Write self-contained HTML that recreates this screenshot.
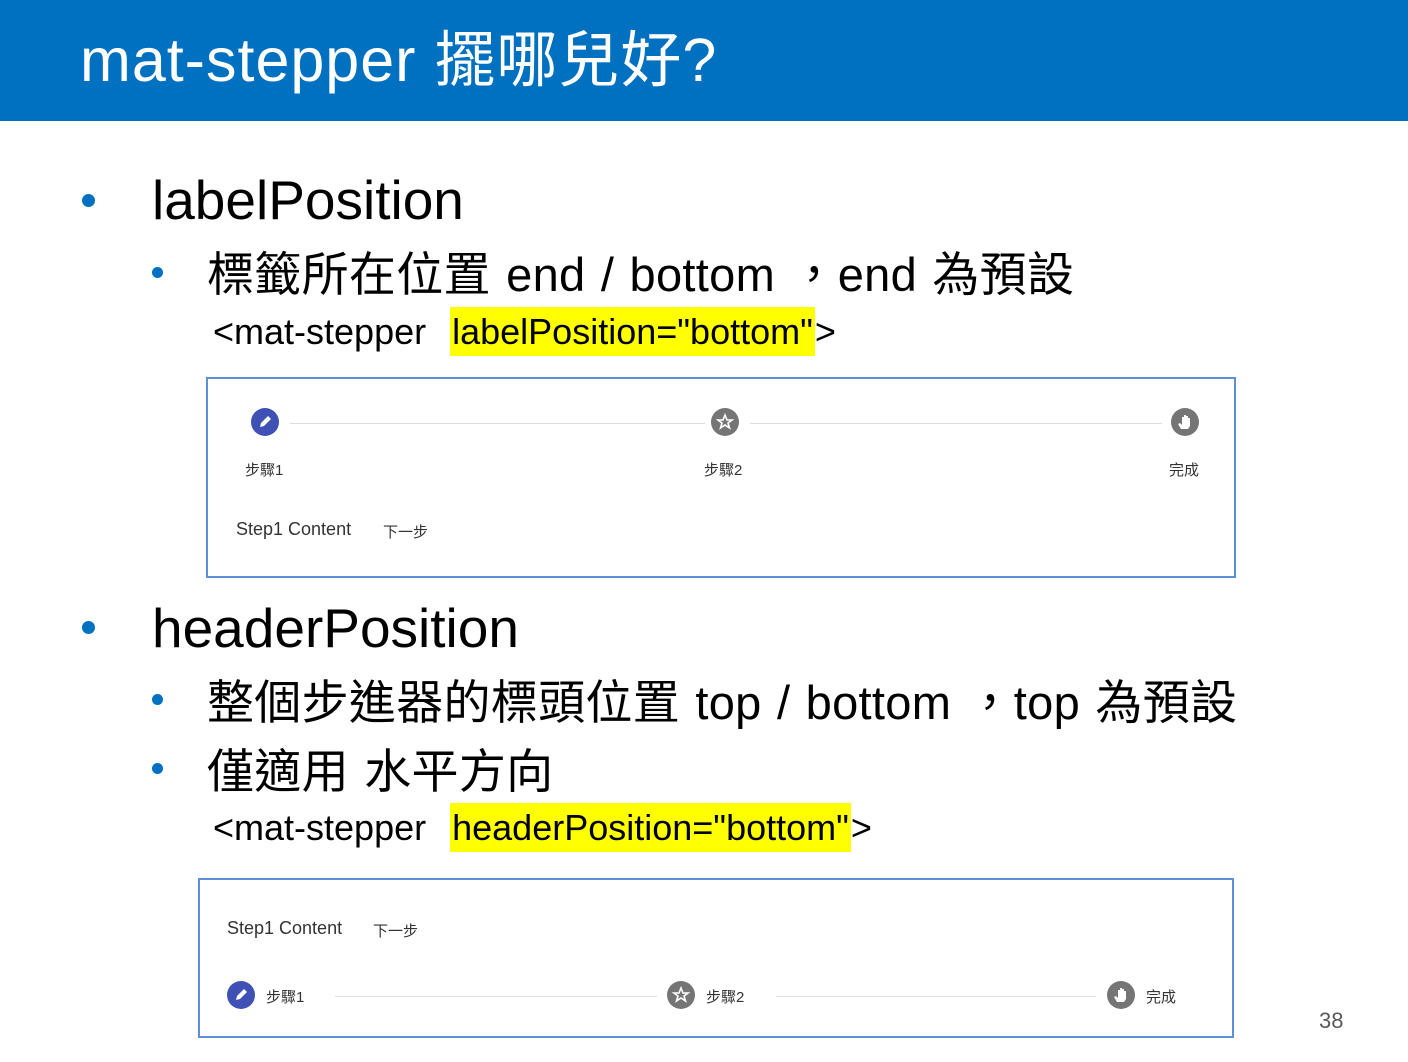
<!DOCTYPE html>
<html><head><meta charset="utf-8"><style>
body{margin:0;width:1408px;height:1062px;background:#fff;position:relative;overflow:hidden;font-family:"Liberation Sans","Noto Sans CJK TC",sans-serif;}
.hdr{position:absolute;left:0;top:0;width:1408px;height:121px;background:#0070c0;}
.hdr span{position:absolute;left:80px;top:10px;color:#fff;font-size:61px;white-space:nowrap;letter-spacing:1px;}
.t{position:absolute;white-space:nowrap;color:#000;}
.dot{position:absolute;width:13px;height:13px;border-radius:50%;background:#0070c0;}
.hl{background:#ffff00;}
.box{position:absolute;border:2px solid #5b8fd8;box-sizing:border-box;}
.s{position:absolute;font-size:15px;color:#333;white-space:nowrap;}
.line{position:absolute;height:1px;background:#ddd;}
.ic{position:absolute;width:28px;height:28px;border-radius:50%;}
.sub{font-size:47px;word-spacing:2px;letter-spacing:0.3px;}
.code{font-size:36px;}
</style></head><body>
<div class="hdr"><span>mat-stepper 擺哪兒好?</span></div>

<div class="dot" style="left:82px;top:194px"></div>
<div class="t" style="left:152px;top:168px;font-size:55px">labelPosition</div>
<div class="dot" style="left:152px;top:267px;width:11px;height:11px"></div>
<div class="t sub" style="left:207px;top:236px">標籤所在位置 end / bottom ，end 為預設</div>
<div class="t code" style="left:213px;top:311px">&lt;mat-stepper <span class="hl" style="padding:4px 2px;margin-left:14px">labelPosition="bottom"</span>&gt;</div>

<div class="box" style="left:206px;top:377px;width:1030px;height:201px">
 <div class="ic" style="left:43px;top:29px;background:#3f51b5"><svg width="28" height="28" viewBox="0 0 28 28"><path d="M9 19l1-4 7-7 3 3-7 7z" fill="#fff"/></svg></div>
 <div class="line" style="left:82px;top:44px;width:415px"></div>
 <div class="ic" style="left:503px;top:29px;background:#757575"><svg width="28" height="28" viewBox="0 0 28 28"><path d="M14 7l2 5h5l-4 3 1.5 5-4.5-3-4.5 3 1.5-5-4-3h5z" fill="none" stroke="#fff" stroke-width="1.6"/></svg></div>
 <div class="line" style="left:542px;top:44px;width:412px"></div>
 <div class="ic" style="left:963px;top:29px;background:#757575"><svg width="28" height="28" viewBox="0 0 28 28"><path d="M10 21l-3-5 2-1 2 2V9h2v6V7h2v8V8h2v7V10h2v8l-2 3z" fill="#fff"/></svg></div>
 <div class="s" style="left:37px;top:80px">步驟1</div>
 <div class="s" style="left:496px;top:80px">步驟2</div>
 <div class="s" style="left:961px;top:80px">完成</div>
 <div class="s" style="left:28px;top:140px;font-size:18px">Step1 Content</div>
 <div class="s" style="left:175px;top:142px">下一步</div>
</div>

<div class="dot" style="left:82px;top:621px"></div>
<div class="t" style="left:152px;top:596px;font-size:55px">headerPosition</div>
<div class="dot" style="left:152px;top:694px;width:11px;height:11px"></div>
<div class="t sub" style="left:207px;top:664px">整個步進器的標頭位置 top / bottom ，top 為預設</div>
<div class="dot" style="left:152px;top:763px;width:11px;height:11px"></div>
<div class="t sub" style="left:207px;top:733px">僅適用 水平方向</div>
<div class="t code" style="left:213px;top:807px">&lt;mat-stepper <span class="hl" style="padding:4px 2px;margin-left:14px">headerPosition="bottom"</span>&gt;</div>

<div class="box" style="left:198px;top:878px;width:1036px;height:160px">
 <div class="s" style="left:27px;top:38px;font-size:18px">Step1 Content</div>
 <div class="s" style="left:173px;top:40px">下一步</div>
 <div class="ic" style="left:27px;top:101px;background:#3f51b5"><svg width="28" height="28" viewBox="0 0 28 28"><path d="M9 19l1-4 7-7 3 3-7 7z" fill="#fff"/></svg></div>
 <div class="s" style="left:66px;top:106px">步驟1</div>
 <div class="line" style="left:135px;top:116px;width:322px"></div>
 <div class="ic" style="left:467px;top:101px;background:#757575"><svg width="28" height="28" viewBox="0 0 28 28"><path d="M14 7l2 5h5l-4 3 1.5 5-4.5-3-4.5 3 1.5-5-4-3h5z" fill="none" stroke="#fff" stroke-width="1.6"/></svg></div>
 <div class="s" style="left:506px;top:106px">步驟2</div>
 <div class="line" style="left:576px;top:116px;width:320px"></div>
 <div class="ic" style="left:907px;top:101px;background:#757575"><svg width="28" height="28" viewBox="0 0 28 28"><path d="M10 21l-3-5 2-1 2 2V9h2v6V7h2v8V8h2v7V10h2v8l-2 3z" fill="#fff"/></svg></div>
 <div class="s" style="left:946px;top:106px">完成</div>
</div>

<div class="t" style="left:1319px;top:1008px;font-size:22px;color:#595959">38</div>
</body></html>
